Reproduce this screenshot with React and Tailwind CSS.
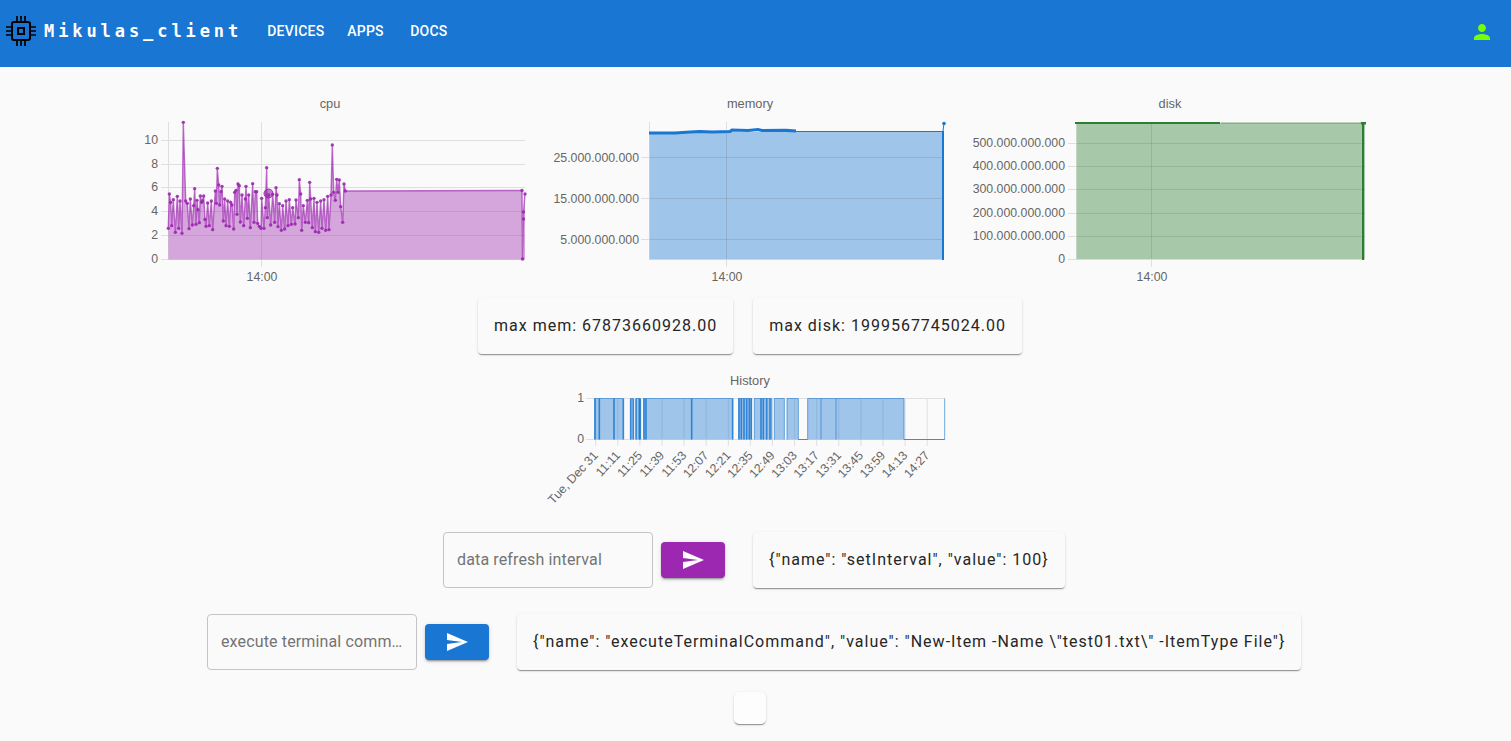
import React from "react";

const F = "'Liberation Sans', Arial, sans-serif";
const G = "#dfdfdf";
const L = "#666666";
const GO = "#444444";

const cpuRaw = [85,340,88,237,92,262,95,332,100,254,106,352,112,244,116,340,120,258,126,355,130,22,137,258,142,265,147,341,151,252,157,330,161,272,164,221,168,328,171,256,174,284,178,323,181,243,185,262,187,258,191,243,195,313,198,334,203,264,208,332,214,258,218,344,226,228,229,265,232,160,236,210,239,270,243,230,246,214,250,318,254,252,258,332,263,258,268,334,272,262,276,270,281,342,284,232,288,226,291,298,294,207,298,212,301,321,306,240,311,332,316,252,318,214,322,310,326,240,331,338,338,206,342,322,346,230,350,230,353,325,358,334,363,340,365,250,372,340,376,278,380,158,382,308,386,240,392,330,398,238,404,322,408,218,411,240,414,335,418,266,424,346,428,272,434,342,438,258,444,332,448,254,454,328,458,278,465,327,468,255,475,308,478,194,482,237,485,346,490,272,496,322,502,256,506,323,509,202,512,252,517,338,522,250,526,350,531,262,536,352,542,258,546,340,552,254,557,346,563,244,567,344,573,240,577,90,581,232,586,256,590,193,594,232,598,195,602,275,608,322,612,207,616,228];
const cpu = [];
for (let i = 0; i < cpuRaw.length; i += 2) cpu.push([140 + cpuRaw[i] / 3, 115 + cpuRaw[i + 1] / 3]);
const cpuLine = [...cpu, [522, 190.5], [522.5, 259], [523.5, 219], [523.5, 212], [525, 194]];
const cpuPts = cpuLine.map((p) => p.map((n) => n.toFixed(1)).join(",")).join(" ");

const T = ({ x, y, a = "end", children, c = L, s = 12.3, w = 400 }) => (
  <text x={x} y={y} textAnchor={a} fill={c} fontSize={s} fontWeight={w} fontFamily={F}>{children}</text>
);
const Title = ({ x, y, children }) => <T x={x} y={y} a="middle" s={12.8} w={400} c="#666666">{children}</T>;

function CpuChart() {
  const ys = [[140, "10"], [164, "8"], [187, "6"], [211, "4"], [235, "2"], [259, "0"]];
  return (
    <svg width="410" height="200" viewBox="130 90 410 200" className="block shrink-0">
      <Title x={330} y={108}>cpu</Title>
      {ys.map(([y, t]) => (
        <g key={t}>
          <line x1="161" x2="525" y1={y + 0.5} y2={y + 0.5} stroke={G} />
          <T x={158} y={y + 4}>{t}</T>
        </g>
      ))}
      <line x1="168.5" x2="168.5" y1="122" y2="260" stroke={G} />
      <line x1="261.5" x2="261.5" y1="122" y2="267" stroke={G} />
      <T x={262} y={281} a="middle">14:00</T>
      <polygon points={`${cpuPts} 525,259.5 168.5,259.5`} fill="#9c27b0" fillOpacity="0.4" stroke="none" />
      <polyline points={cpuPts} fill="none" stroke="#9c27b0" strokeOpacity="0.65" strokeWidth="1.4" />
      {cpuLine.map(([x, y], i) => <circle key={i} cx={x} cy={y} r="1.7" fill="#9c27b0" fillOpacity="0.9" />)}
      <circle cx="268.5" cy="193.5" r="4.5" fill="#9c27b0" fillOpacity="0.6" stroke="#9c27b0" strokeWidth="1" />
    </svg>
  );
}

function MemChart() {
  const ys = [[157, "25.000.000.000"], [198, "15.000.000.000"], [239, "5.000.000.000"]];
  return (
    <svg width="420" height="200" viewBox="540 90 420 200" className="block shrink-0">
      <Title x={750} y={108}>memory</Title>
      <line x1="649.5" x2="649.5" y1="122" y2="132" stroke={G} />
      <line x1="726.5" x2="726.5" y1="122" y2="132" stroke={G} />
      <rect x="649" y="132" width="294" height="127.5" fill="#1976d2" fillOpacity="0.4" />
      {ys.map(([y, t]) => (
        <g key={t}>
          <line x1="641" x2="649" y1={y + 0.5} y2={y + 0.5} stroke={G} />
          <line x1="649" x2="943" y1={y + 0.5} y2={y + 0.5} stroke={GO} strokeOpacity="0.15" />
          <T x={639} y={y + 4.5}>{t}</T>
        </g>
      ))}
      <line x1="726.5" x2="726.5" y1="132" y2="259" stroke={GO} strokeOpacity="0.15" />
      <line x1="726.5" x2="726.5" y1="259" y2="267" stroke={G} />
      <line x1="649.5" x2="649.5" y1="132" y2="260" stroke="#bcd0e6" />
      <line x1="649" x2="943" y1="259.5" y2="259.5" stroke="#c5d9ee" />
      <T x={727} y={281} a="middle">14:00</T>
      <polyline points="649,133 675,133 690,132 700,131.5 712,132 730,131.5 732,130 748,130.5 758,129.5 762,130.5 786,130.3 796,131" fill="none" stroke="#1976d2" strokeWidth="3.2" />
      <line x1="796" x2="942" y1="131.5" y2="131.5" stroke="#1976d2" strokeWidth="1.2" />
      <line x1="943" x2="943" y1="131" y2="260" stroke="#1976d2" strokeWidth="2" />
      <line x1="943" x2="944" y1="131" y2="123" stroke="#1976d2" />
      <circle cx="944" cy="123.5" r="1.8" fill="#1976d2" />
    </svg>
  );
}

function DiskChart() {
  const ys = [[143, "500.000.000.000"], [166, "400.000.000.000"], [189, "300.000.000.000"], [213, "200.000.000.000"], [236, "100.000.000.000"], [259, "0"]];
  return (
    <svg width="420" height="200" viewBox="960 90 420 200" className="block shrink-0">
      <Title x={1170} y={108}>disk</Title>
      <rect x="1076" y="123" width="289" height="136.5" fill="#2e7d32" fillOpacity="0.4" />
      {ys.map(([y, t]) => (
        <g key={t}>
          <line x1="1068" x2="1076" y1={y + 0.5} y2={y + 0.5} stroke={G} />
          {y !== 259 && <line x1="1076" x2="1365" y1={y + 0.5} y2={y + 0.5} stroke={GO} strokeOpacity="0.15" />}
          <T x={1065} y={y + 4}>{t}</T>
        </g>
      ))}
      <line x1="1151.5" x2="1151.5" y1="123" y2="259" stroke={GO} strokeOpacity="0.15" />
      <line x1="1151.5" x2="1151.5" y1="259" y2="267" stroke={G} />
      <line x1="1076.5" x2="1076.5" y1="123" y2="260" stroke="#c3d6c4" />
      <T x={1152} y={281} a="middle">14:00</T>
      <line x1="1221" x2="1362" y1="123" y2="123" stroke="#2e7d32" strokeOpacity="0.6" />
      <line x1="1075" x2="1220" y1="123" y2="123" stroke="#2e7d32" strokeWidth="2" />
      <line x1="1363" x2="1363" y1="122" y2="260" stroke="#2e7d32" strokeWidth="2" />
      <rect x="1361" y="122" width="5" height="2.5" fill="#2e7d32" />
    </svg>
  );
}

const labels = ["Tue, Dec 31", "11:11", "11:25", "11:39", "11:53", "12:07", "12:21", "12:35", "12:49", "13:03", "13:17", "13:31", "13:45", "13:59", "14:13", "14:27"];
const zx = (z) => 540 + z / 3;
const filled = [[162, 250], [272, 280], [288, 301], [309, 578], [594, 636], [643, 695], [703, 733], [741, 775], [803, 1092]];
const darks = [165, 178, 222, 250, 272, 280, 288, 298, 301, 312, 318, 455, 578, 597, 604, 612, 620, 628, 634, 663, 670, 680, 690];
const thin = [643, 695, 703, 733, 741, 775, 803, 843, 888, 1092, 1214];

function HistoryChart() {
  const Y1 = 398.5;
  const Y0 = 439.5;
  const bottoms = [[775, 803], [1092, 1214]];
  return (
    <svg width="420" height="150" viewBox="540 370 420 150" className="block shrink-0">
      <Title x={750} y={385}>History</Title>
      <line x1="594" x2="945" y1={Y1} y2={Y1} stroke={G} />
      <line x1="594" x2="945" y1={Y0} y2={Y0} stroke={G} />
      <line x1="586" x2="594" y1={Y1} y2={Y1} stroke={G} />
      <line x1="586" x2="594" y1={Y0} y2={Y0} stroke={G} />
      <T x={584} y={402}>1</T>
      <T x={584} y={443}>0</T>
      {labels.map((t, i) => {
        const x = 595.7 + i * 22.1;
        return (
          <g key={t}>
            <line x1={x} x2={x} y1={Y1} y2="446" stroke={G} />
            <text x={x + 3} y="456" transform={`rotate(-47 ${x + 3} 456)`} textAnchor="end" fill={L} fontSize="12.3" fontFamily={F}>{t}</text>
          </g>
        );
      })}
      {filled.map(([a, b]) => (
        <rect key={a} x={zx(a)} y={Y1} width={(b - a) / 3} height={Y0 - Y1} fill="#1976d2" fillOpacity="0.4" />
      ))}
      {filled.map(([a, b]) => (
        <line key={a} x1={zx(a)} x2={zx(b)} y1={Y1} y2={Y1} stroke="#1976d2" strokeOpacity="0.55" />
      ))}
      {bottoms.map(([a, b]) => (
        <line key={a} x1={zx(a)} x2={zx(b)} y1={Y0} y2={Y0} stroke="#1976d2" strokeOpacity="0.8" />
      ))}
      {thin.map((z) => (
        <line key={z} x1={zx(z)} x2={zx(z)} y1={Y1} y2={Y0} stroke="#1976d2" strokeOpacity="0.6" />
      ))}
      {darks.map((z) => (
        <line key={z} x1={zx(z)} x2={zx(z)} y1={Y1} y2={Y0} stroke="#1976d2" strokeWidth="1.6" strokeOpacity="0.85" />
      ))}
    </svg>
  );
}

const SHADOW = "shadow-[0_2px_1px_-1px_rgba(0,0,0,0.25),0_1px_1px_0_rgba(0,0,0,0.16),0_1px_3px_0_rgba(0,0,0,0.12)]";

const Card = ({ className = "", children }) => (
  <div className={`h-14 flex items-center px-4 rounded bg-[#fafafa] text-[16px] tracking-[1px] text-[#262626] whitespace-nowrap ${SHADOW} ${className}`}>
    {children}
  </div>
);

const Send = ({ className }) => (
  <button className={`w-16 h-9 rounded flex items-center justify-center shadow-[0_3px_1px_-2px_rgba(0,0,0,0.2),0_2px_2px_0_rgba(0,0,0,0.14),0_1px_5px_0_rgba(0,0,0,0.12)] ${className}`}>
    <svg width="24" height="24" viewBox="0 0 24 24" fill="#ffffff"><path d="M2.01 21 23 12 2.01 3 2 10l15 2-15 2z" /></svg>
  </button>
);

const Field = ({ text }) => (
  <input
    readOnly
    placeholder={text}
    className="w-[210px] h-14 rounded border border-[#c4c4c4] bg-transparent px-[13px] pb-[2px] text-[16px] tracking-[0.14px] text-ellipsis outline-none placeholder:text-[#747474] placeholder:opacity-100"
  />
);

const Chip = () => (
  <svg width="42" height="40" viewBox="0 12 42 40" fill="none" stroke="#000000" strokeWidth="2" className="shrink-0 -mt-[5px]">
    <rect x="12" y="23" width="18" height="18" rx="2" />
    <rect x="18" y="29" width="6" height="6" />
    <path d="M17 17v6M21 17v6M25 17v6M17 41v6M21 41v6M25 41v6M6 28h6M6 32h6M6 36h6M30 28h6M30 32h6M30 36h6" strokeWidth="1.7" />
  </svg>
);

export default function App() {
  return (
    <div className="w-[1511px] h-[741px] overflow-hidden bg-[#fafafa] font-['Roboto',sans-serif]">
      <header className="h-[67px] bg-[#1976d2] flex items-center text-white">
        <Chip />
        <span className="ml-[2px] -mt-[4px] font-['DejaVu_Sans_Mono',monospace] font-bold text-[17px] tracking-[3.92px] whitespace-nowrap">Mikulas_client</span>
        <nav className="flex items-center text-[14px] font-medium tracking-[0.25px] -mt-[5px] ml-[25px] whitespace-nowrap">
          <span className="w-[80px]">DEVICES</span>
          <span className="w-[63px]">APPS</span>
          <span>DOCS</span>
        </nav>
        <svg width="24" height="24" viewBox="0 0 24 24" fill="#76ff03" className="ml-auto mr-[17px] -mt-[3px]">
          <path d="M12 12c2.21 0 4-1.79 4-4s-1.79-4-4-4-4 1.79-4 4 1.79 4 4 4m0 2c-2.67 0-8 1.34-8 4v2h16v-2c0-2.66-5.33-4-8-4" />
        </svg>
      </header>

      <main className="flex flex-col">
        <div className="flex pl-[130px] mt-[23px]"><CpuChart /><MemChart /><DiskChart /></div>
        <div className="flex gap-5 pl-[478px] mt-2">
          <Card>max mem: 67873660928.00</Card>
          <Card>max disk: 1999567745024.00</Card>
        </div>
        <div className="flex pl-[540px] mt-4"><HistoryChart /></div>
        <div className="flex items-center pl-[443px] mt-3">
          <Field text="data refresh interval" />
          <Send className="ml-2 bg-[#9c27b0]" />
          <Card className="ml-7">{'{"name": "setInterval", "value": 100}'}</Card>
        </div>
        <div className="flex items-center pl-[207px] mt-[26px]">
          <Field text="execute terminal command" />
          <Send className="ml-2 bg-[#1976d2]" />
          <Card className="ml-7">{'{"name": "executeTerminalCommand", "value": "New-Item -Name \\"test01.txt\\" -ItemType File"}'}</Card>
        </div>
        <div className="flex pl-[734px] mt-[22px]">
          <div className={`w-8 h-8 rounded-[5px] bg-[#fdfdfd] ${SHADOW}`} />
        </div>
      </main>
    </div>
  );
}
